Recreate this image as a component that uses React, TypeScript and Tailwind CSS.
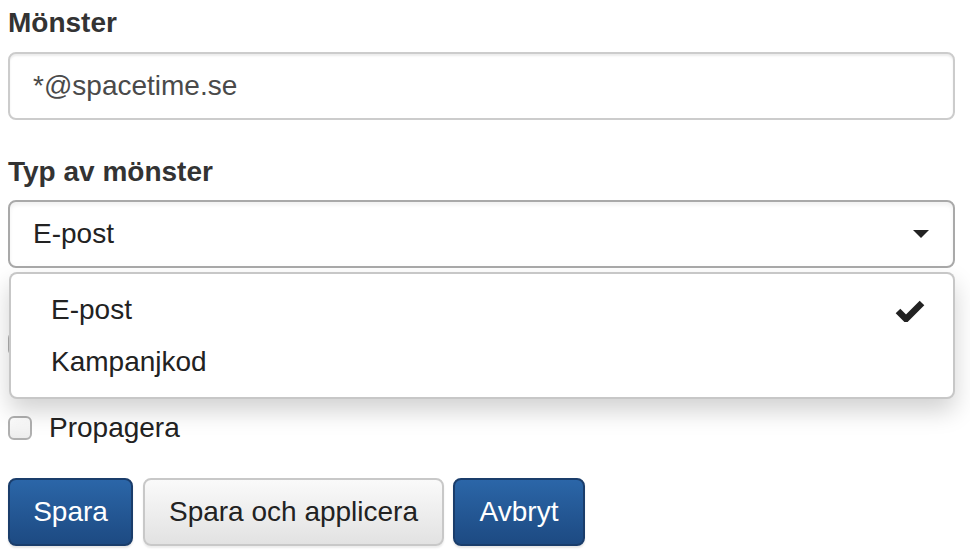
import React from "react";

export default function App() {
  const font = { fontFamily: '"Liberation Sans", Arial, Helvetica, sans-serif' };
  return (
    <div className="relative w-[970px] h-[554px] bg-white overflow-hidden text-[#333]" style={font}>
      <div className="pl-[8px] pr-[15px] pt-[3px]">
        <div className="text-[28px] leading-[40px] font-bold text-[#333] mb-[9px]">Mönster</div>
        <div className="h-[68px] w-[947px] border-2 border-[#cccccc] rounded-[8px] flex items-center pl-[23px] text-[28px] text-[#4a4a4a] shadow-[inset_0_2px_2px_rgba(0,0,0,0.075)]">
          *@spacetime.se
        </div>
        <div className="text-[28px] leading-[40px] font-bold text-[#333] mt-[32px] mb-[8px]">Typ av mönster</div>
        <div className="h-[68px] w-[947px] border-2 border-[#a9a9a9] rounded-[8px] flex items-center justify-between pl-[23px] pr-[24px] text-[28px] text-[#222] bg-white shadow-[inset_0_3px_4px_rgba(0,0,0,0.06)]">
          <span>E-post</span>
          <svg width="16" height="8" viewBox="0 0 16 8"><polygon points="0,0 16,0 8,8" fill="#222" /></svg>
        </div>
        <div className="mt-[64px] flex items-center h-[24px]">
          <span className="w-[24px] h-[24px] rounded-[6px] border-2 border-[#b0b0b0] bg-gradient-to-b from-white to-[#ececec]" />
        </div>
        <div className="mt-[60px] flex items-center h-[24px]">
          <span className="w-[24px] h-[24px] rounded-[6px] border-2 border-[#b0b0b0] bg-gradient-to-b from-white to-[#ececec]" />
          <span className="ml-[17px] text-[28px] text-[#222]">Propagera</span>
        </div>
        <div className="mt-[38px] flex">
          <button className="h-[68px] w-[125px] rounded-[8px] border-2 border-[#1a3d6b] bg-gradient-to-b from-[#2b66a8] to-[#1d4a82] text-white text-[28px] shadow-[0_2px_2px_rgba(0,0,0,0.1)]">Spara</button>
          <button className="ml-[10px] h-[68px] w-[301px] rounded-[8px] border-2 border-[#c8c8c8] bg-gradient-to-b from-[#fafafa] to-[#e2e2e2] text-[#222] text-[28px] shadow-[0_2px_2px_rgba(0,0,0,0.08)]">Spara och applicera</button>
          <button className="ml-[9px] h-[68px] w-[132px] rounded-[8px] border-2 border-[#1a3d6b] bg-gradient-to-b from-[#2b66a8] to-[#1d4a82] text-white text-[28px] shadow-[0_2px_2px_rgba(0,0,0,0.1)]">Avbryt</button>
        </div>
      </div>

      <div className="absolute left-[9px] top-[272px] w-[946px] h-[127px] bg-white border-2 border-[rgba(0,0,0,0.22)] rounded-[8px] shadow-[0_12px_24px_rgba(0,0,0,0.18)] py-[10px]">
        <div className="h-[52px] flex items-center justify-between pl-[40px] pr-[28px] text-[28px] text-[#222]">
          <span>E-post</span>
          <svg width="30" height="24" viewBox="0 0 30 24">
            <polyline points="3,13 11,21 27,5" fill="none" stroke="#222" strokeWidth="6.5" strokeLinejoin="miter" strokeLinecap="butt" />
          </svg>
        </div>
        <div className="h-[52px] flex items-center pl-[40px] text-[28px] text-[#222]">Kampanjkod</div>
      </div>
    </div>
  );
}
